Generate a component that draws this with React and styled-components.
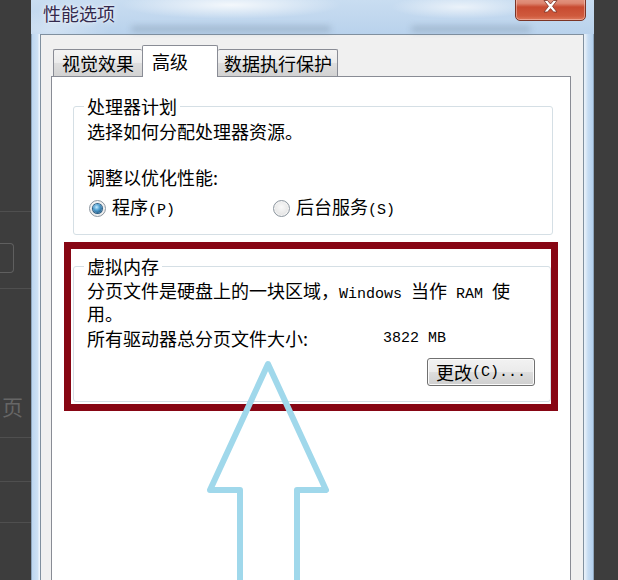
import React from "react";
import styled, { createGlobalStyle } from "styled-components";

const GlobalStyle = createGlobalStyle`
  html, body {
    margin: 0;
    padding: 0;
    background: #3c3c3c;
  }
  body {
    font-family: "Noto Sans CJK SC", "Noto Sans", sans-serif;
    color: #000;
  }
`;

const Screen = styled.div`
  position: relative;
  display: flex;
  width: 618px;
  height: 580px;
  overflow: hidden;
  background: #3c3c3c;
`;

const Backdrop = styled.div`
  display: flex;
  flex-direction: column;
  flex-shrink: 0;
  width: ${(p) => p.w}px;
  background: #3d3d3d;
`;

const BackRow = styled.div`
  flex-shrink: 0;
  height: ${(p) => p.h}px;
  border-bottom: ${(p) => (p.line ? "1px solid #4f4f4f" : "none")};
`;

const BackBox = styled.div`
  flex-shrink: 0;
  width: 13px;
  height: 28px;
  border: 1px solid #5f5f5f;
  border-left: none;
  border-radius: 0 4px 4px 0;
`;

const BackText = styled.div`
  flex-shrink: 0;
  height: 20px;
  padding-left: 2px;
  font-size: 21px;
  line-height: 20px;
  color: #666;
  white-space: nowrap;
`;

const Window = styled.div`
  display: flex;
  flex-direction: column;
  flex-shrink: 0;
  width: 563px;
  height: 620px;
  background:
    linear-gradient(to right, #8fa6bd 0 1px, #bdd6ef 1px, #cfe2f5 7px, #edf4fb 8px 9px, transparent 9px),
    linear-gradient(to left, #8fa6bd 0 1px, #b3d0ed 1px, #c6dcf2 6px, #e6eff8 9px 10px, transparent 10px),
    #c5dbf0;
`;

const TitleBar = styled.div`
  height: 34px;
  flex-shrink: 0;
  display: flex;
  flex-direction: column;
  background:
    radial-gradient(ellipse 110px 14px at 200px 5px, rgba(255, 255, 255, 0.8), transparent),
    radial-gradient(ellipse 70px 12px at 430px 7px, rgba(255, 255, 255, 0.65), transparent),
    radial-gradient(ellipse 60px 20px at 20px 30px, rgba(255, 255, 255, 0.35), transparent),
    linear-gradient(#c9ddf1, #b9d2ec);
`;

const TitleRow = styled.div`
  display: flex;
  justify-content: space-between;
  align-items: flex-start;
  height: 24px;
  padding: 0 8px 0 12px;
`;

const Title = styled.div`
  padding-top: 3px;
  font-size: 18px;
  line-height: 20px;
  color: #33294d;
  text-shadow: 0 0 6px rgba(255, 255, 255, 0.9), 0 0 2px rgba(255, 255, 255, 0.8);
`;

const CloseButton = styled.div`
  display: flex;
  align-items: center;
  justify-content: center;
  width: 69px;
  height: 27px;
  margin-top: -8px;
  border: 1px solid #7b3426;
  border-radius: 0 0 5px 5px;
  background: linear-gradient(#eba898 0%, #dd8670 38%, #c84a30 52%, #cf5a3d 85%, #de7a5e 100%);
  box-shadow: inset 0 0 0 1px rgba(255, 220, 210, 0.45);
`;

const GlassBlur = styled.div`
  display: flex;
  gap: 80px;
  height: 10px;
  padding-left: 100px;
`;

const Smudge = styled.span`
  display: block;
  width: ${(p) => p.w}px;
  height: 6px;
  margin-top: 2px;
  border-radius: 4px;
  background: rgba(110, 130, 150, 0.35);
  filter: blur(3px);
`;

const Client = styled.div`
  display: flex;
  flex-direction: column;
  flex: 1;
  margin: 0 10px 0 9px;
  padding: 10px 12px 0 10px;
  border: 1px solid #80909f;
  border-bottom: none;
  background: #f0f0f0;
`;

const TabStrip = styled.div`
  display: flex;
  align-items: flex-end;
  height: 32px;
  padding-left: 2px;
  margin-bottom: -1px;
  position: relative;
  z-index: 1;
`;

const Tab = styled.div`
  display: flex;
  align-items: center;
  box-sizing: border-box;
  width: ${(p) => p.w}px;
  height: ${(p) => (p.active ? 32 : 27)}px;
  margin-bottom: ${(p) => (p.active ? 0 : 1)}px;
  padding-left: ${(p) => p.pl}px;
  border: 1px solid #898c95;
  border-bottom: none;
  border-left-style: ${(p) => (p.noLeft ? "none" : "solid")};
  border-right-style: ${(p) => (p.noRight ? "none" : "solid")};
  border-radius: 2px 2px 0 0;
  background: ${(p) =>
    p.active ? "#fff" : "linear-gradient(#f4f4f4 0%, #ececec 48%, #dedede 52%, #d2d2d2 100%)"};
  font-size: 18px;
  line-height: 19px;
`;

const Panel = styled.div`
  flex: 1;
  display: flex;
  flex-direction: column;
  padding: 20px 17px 0 21px;
  border: 1px solid #898c95;
  background: #fff;
`;

const Group = styled.fieldset`
  margin: 0;
  padding: 0 13px ${(p) => p.pb}px 13px;
  border: 1px solid #d5dfe5;
  border-radius: 3px;
  min-width: 0;
`;

const Legend = styled.legend`
  margin-left: -3px;
  padding: 0 3px;
  font-size: 18px;
  line-height: 19px;
`;

const Line = styled.div`
  margin-top: ${(p) => p.mt || 0}px;
  font-size: 18px;
  line-height: 19px;
  line-break: strict;
`;

const Mono = styled.span`
  font-family: "Liberation Mono", "DejaVu Sans Mono", monospace;
  font-size: 15px;
  white-space: pre;
`;

const RadioRow = styled.div`
  display: flex;
  align-items: center;
  height: 19px;
  margin-top: 12px;
  padding-left: 2px;
`;

const RadioItem = styled.label`
  display: flex;
  align-items: center;
  gap: 6px;
  width: ${(p) => p.w}px;
  font-size: 18px;
  line-height: 19px;
`;

const RadioDot = styled.span`
  position: relative;
  flex-shrink: 0;
  box-sizing: border-box;
  width: 17px;
  height: 17px;
  border: 1px solid #8c969f;
  border-radius: 50%;
  background: radial-gradient(circle at 50% 40%, #f9f9f9, #dcdcdc);
  box-shadow: inset 0 0 0 1px #f4f4f4;
  &::after {
    content: "";
    display: ${(p) => (p.checked ? "block" : "none")};
    position: absolute;
    left: 3px;
    top: 3px;
    width: 9px;
    height: 9px;
    border-radius: 50%;
    background: radial-gradient(circle at 40% 35%, #c9ecff 0, #58a6d6 35%, #1d5a88 80%);
    box-shadow: 0 0 0 1px #2c5f86;
  }
`;

const Highlight = styled.div`
  margin: 7px -5px 0 -9px;
  padding: 8px 0 2px 2px;
  border: 7px solid #870614;
`;

const InfoRow = styled.div`
  display: grid;
  grid-template-columns: 296px auto;
  margin-top: 6px;
  font-size: 18px;
  line-height: 19px;
`;

const ButtonRow = styled.div`
  display: flex;
  justify-content: flex-end;
  margin-top: 10px;
  padding-right: 2px;
`;

const Button = styled.div`
  display: flex;
  align-items: center;
  justify-content: center;
  box-sizing: border-box;
  width: 108px;
  height: 28px;
  border: 1px solid #707070;
  border-radius: 3px;
  background: linear-gradient(#f2f2f2 0%, #ebebeb 48%, #dddddd 52%, #cfcfcf 100%);
  box-shadow: inset 0 0 0 1px #fbfbfb;
  font-size: 18px;
  line-height: 19px;
`;

const ArrowLayer = styled.svg`
  position: absolute;
  left: 0;
  top: 0;
  pointer-events: none;
`;

export default function App() {
  return (
    <>
      <GlobalStyle />
      <Screen>
        <Backdrop w={31}>
          <BackRow h={211} line />
          <BackRow h={31} />
          <BackBox />
          <BackRow h={15} line />
          <BackRow h={107} />
          <BackText>页</BackText>
          <BackRow h={21} line />
          <BackRow h={43} line />
          <BackRow h={40} line />
        </Backdrop>

        <Window>
          <TitleBar>
            <TitleRow>
              <Title>性能选项</Title>
              <CloseButton>
                <svg width="15" height="13" viewBox="0 0 15 13">
                  <path
                    d="M1 0.5 L4.5 0.5 L7.5 4 L10.5 0.5 L14 0.5 L9.5 6.3 L14 12 L10.5 12 L7.5 8.6 L4.5 12 L1 12 L5.5 6.3 Z"
                    fill="#fff"
                    stroke="#7a3224"
                    strokeWidth="0.8"
                  />
                </svg>
              </CloseButton>
            </TitleRow>
            <GlassBlur>
              <Smudge w={200} />
              <Smudge w={120} />
            </GlassBlur>
          </TitleBar>

          <Client>
            <TabStrip>
              <Tab w={89} pl={8} noRight>视觉效果</Tab>
              <Tab w={76} pl={9} active>高级</Tab>
              <Tab w={120} pl={6} noLeft>数据执行保护</Tab>
            </TabStrip>

            <Panel>
              <Group pb={16}>
                <Legend>处理器计划</Legend>
                <Line mt={6}>选择如何分配处理器资源。</Line>
                <Line mt={27}>调整以优化性能:</Line>
                <RadioRow>
                  <RadioItem w={184}>
                    <RadioDot checked />
                    <span>程序<Mono>(P)</Mono></span>
                  </RadioItem>
                  <RadioItem w={140}>
                    <RadioDot />
                    <span>后台服务<Mono>(S)</Mono></span>
                  </RadioItem>
                </RadioRow>
              </Group>

              <Highlight>
                <Group pb={15}>
                  <Legend>虚拟内存</Legend>
                  <Line mt={5}>
                    {"分页文件是硬盘上的一块区域，"}
                    <Mono>Windows </Mono>
                    {"当作"}
                    <Mono> RAM </Mono>
                    {"使"}
                    {"用。"}
                  </Line>
                  <InfoRow>
                    <span>所有驱动器总分页文件大小:</span>
                    <Mono>3822 MB</Mono>
                  </InfoRow>
                  <ButtonRow>
                    <Button>
                      更改<Mono>(C)...</Mono>
                    </Button>
                  </ButtonRow>
                </Group>
              </Highlight>
            </Panel>
          </Client>
        </Window>

        <Backdrop w={24} />

        <ArrowLayer width="618" height="580" viewBox="0 0 618 580">
          <path
            d="M240 600 L240 490 L210 490 L268 364 L326 490 L297 490 L297 600"
            fill="none"
            stroke="#a0d8eb"
            strokeWidth="6"
            strokeLinejoin="round"
          />
        </ArrowLayer>
      </Screen>
    </>
  );
}
